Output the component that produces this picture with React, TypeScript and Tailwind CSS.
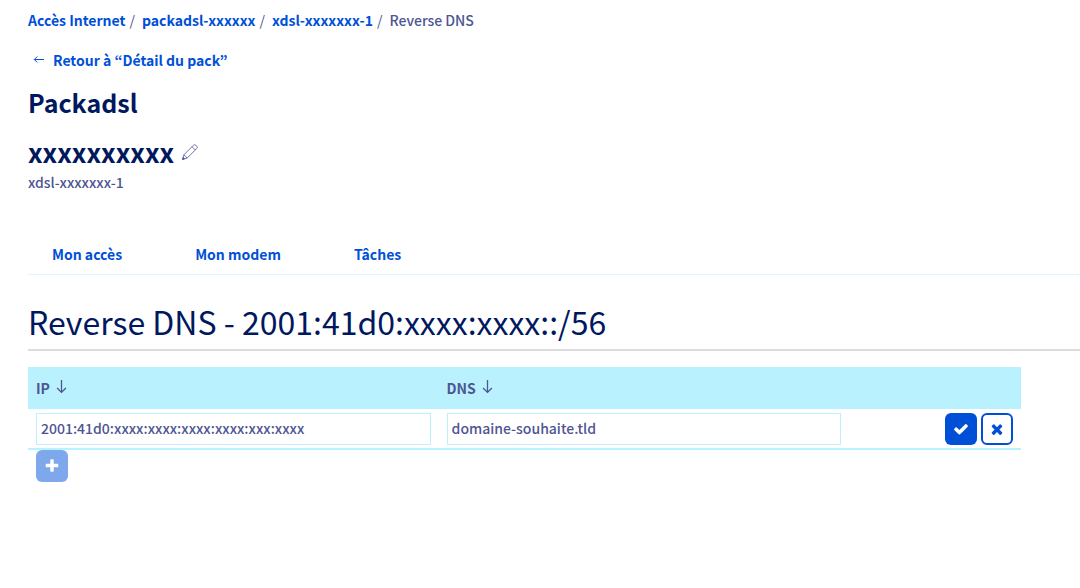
import { useState } from "react";

const CHECK =
  "M1671 566q0 40-28 68l-724 724-136 136q-28 28-68 28t-68-28l-136-136-362-362q-28-28-28-68t28-68l136-136q28-28 68-28t68 28l294 295 656-657q28-28 68-28t68 28l136 136q28 28 28 68z";
const TIMES =
  "M1490 1322q0 40-28 68l-136 136q-28 28-68 28t-68-28l-294-294-294 294q-28 28-68 28t-68-28l-136-136q-28-28-28-68t28-68l294-294-294-294q-28-28-28-68t28-68l136-136q28-28 68-28t68 28l294 294 294-294q28-28 68-28t68 28l136 136q28 28 28 68t-28 68l-294 294 294 294q28 28 28 68z";
const PLUS =
  "M1600 736v192q0 40-28 68t-68 28h-416v416q0 40-28 68t-68 28h-192q-40 0-68-28t-28-68v-416h-416q-40 0-68-28t-28-68v-192q0-40 28-68t68-28h416v-416q0-40 28-68t68-28h192q40 0 68 28t28 68v416h416q40 0 68 28t28 68z";

function SolidIcon({ d }: { d: string }) {
  return (
    <svg viewBox="0 0 1792 1792" className="size-4" fill="currentColor" aria-hidden="true">
      <path d={d} />
    </svg>
  );
}

function BackArrow() {
  return (
    <svg viewBox="0 0 12 12" className="size-3" fill="none" stroke="currentColor" aria-hidden="true">
      <path d="M11 5.5H1.5M4.3 2.5L1.3 5.5l3 3" />
    </svg>
  );
}

function SortArrow() {
  return (
    <svg viewBox="0 0 12 16" className="h-4 w-3" fill="none" stroke="currentColor" strokeWidth="1.3" aria-hidden="true">
      <path d="M5.5 0v12.3M1.1 8L5.5 12.4 9.9 8" />
    </svg>
  );
}

function Pencil() {
  return (
    <svg viewBox="0 0 16 16" className="size-4" fill="none" stroke="currentColor" strokeWidth="0.8" strokeLinejoin="round" aria-hidden="true">
      <path d="M0.6 15.4l1.3-4.6L11.4 1.3q1.3-1.2 2.5 0l.8.8q1.2 1.2 0 2.5L5.2 14.1zM1.9 10.8l3.3 3.3M10 2.7L13.3 6" />
      <path d="M0.6 15.4l.6-2 1.4 1.4z" fill="currentColor" />
    </svg>
  );
}

const crumbs = ["Accès Internet", "packadsl-xxxxxx", "xdsl-xxxxxxx-1"];
const tabs = ["Mon accès", "Mon modem", "Tâches"];
const field =
  "block h-8 w-full border border-[#bef1ff] bg-white px-1 pb-0.5 font-medium text-[#4d5592] outline-none focus:border-[#0050d7]";

export default function App() {
  const [ip, setIp] = useState("2001:41d0:xxxx:xxxx:xxxx:xxxx:xxx:xxxx");
  const [dns, setDns] = useState("domaine-souhaite.tld");

  return (
    <main className="bg-white pt-2 pl-7 font-['Noto_Sans_CJK_KR','Noto_Sans',sans-serif] text-[14px] leading-6 text-[#4d5592]">
      <nav aria-label="Fil d’Ariane">
        <ol className="flex">
          {crumbs.map((c) => (
            <li key={c} className="flex gap-1 pr-[7px]">
              <a href="#" className="font-bold text-[#0050d7]">{c}</a>
              <span>/</span>
            </li>
          ))}
          <li className="font-medium">Reverse DNS</li>
        </ol>
      </nav>

      <a href="#" className="mt-4 ml-[5px] flex w-fit items-center gap-2 font-bold text-[#0050d7]">
        <BackArrow />
        Retour à “Détail du pack”
      </a>

      <h1 className="mt-3 text-[25px] leading-9 font-bold text-[#00185e]">Packadsl</h1>
      <div className="mt-3.5 flex items-center gap-2">
        <h2 className="text-[26px] leading-9 font-bold text-[#00185e]">xxxxxxxxxx</h2>
        <button type="button" aria-label="Modifier le nom">
          <Pencil />
        </button>
      </div>
      <p className="font-medium">xdsl-xxxxxxx-1</p>

      <nav className="mt-8 flex gap-[25px] border-b border-[#def8ff]" aria-label="Sections">
        {tabs.map((t) => (
          <a key={t} href="#" className="px-6 pt-4 pb-2 font-bold text-[#0050d7]">
            {t}
          </a>
        ))}
      </nav>

      <h2 className="mt-5.5 border-b-2 border-[#dcdcdc] pb-1 text-[32px] leading-12 text-[#00185e]">
        Reverse DNS - 2001:41d0:xxxx:xxxx::/56
      </h2>

      <div className="mt-4 mr-[59px]">
        <table className="w-full table-fixed border-collapse text-left">
          <thead className="bg-[#b9f1ff]">
            <tr className="h-[42px]">
              {["IP", "DNS"].map((h) => (
                <th key={h} scope="col" className="w-[41.35%] px-2 font-bold">
                  <button type="button" className="flex items-center gap-1.5">
                    {h}
                    <SortArrow />
                  </button>
                </th>
              ))}
              <td />
            </tr>
          </thead>
          <tbody>
            <tr className="border-b-2 border-[#b9f1ff]">
              <td className="px-2 pt-1 pb-[3px]">
                <input aria-label="IP" className={field} value={ip} onChange={(e) => setIp(e.target.value)} />
              </td>
              <td className="px-2 pt-1 pb-[3px]">
                <input aria-label="DNS" className={field} value={dns} onChange={(e) => setDns(e.target.value)} />
              </td>
              <td className="px-2 pt-1 pb-[3px]">
                <div className="flex justify-end gap-1">
                  <button type="button" aria-label="Valider" className="flex size-8 items-center justify-center rounded-md bg-[#0050d7] text-white">
                    <SolidIcon d={CHECK} />
                  </button>
                  <button type="button" aria-label="Annuler" className="flex size-8 items-center justify-center rounded-md border-2 border-[#0050d7] bg-white text-[#0050d7]">
                    <SolidIcon d={TIMES} />
                  </button>
                </div>
              </td>
            </tr>
          </tbody>
        </table>
        <button type="button" disabled aria-label="Ajouter" className="ml-2 flex size-8 items-center justify-center rounded-md bg-[#7fa7eb] text-white">
          <SolidIcon d={PLUS} />
        </button>
      </div>
    </main>
  );
}
